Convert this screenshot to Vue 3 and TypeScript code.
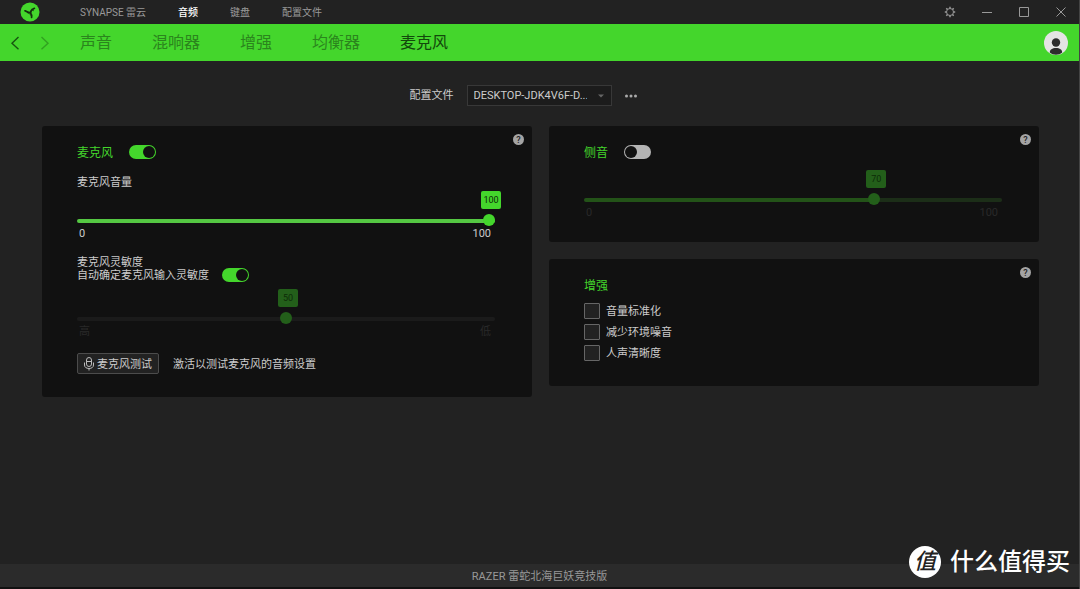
<script setup lang="ts">
import { computed, ref } from 'vue'

const menu = ['SYNAPSE 雷云', '音频', '键盘', '配置文件']
const activeMenu = ref('音频')
const tabs = ['声音', '混响器', '增强', '均衡器', '麦克风']
const activeTab = ref('麦克风')

const profile = ref('DESKTOP-JDK4V6F-D...')

const micOn = ref(true)
const micVolume = ref(100)
const autoSensitivity = ref(true)
const sensitivity = ref(50)
const sidetoneOn = ref(false)
const sidetone = ref(70)

const enhancements = ref([
  { id: 'normalize', label: '音量标准化', checked: false },
  { id: 'noise', label: '减少环境噪音', checked: false },
  { id: 'clarity', label: '人声清晰度', checked: false },
])

const micStyle = computed(() => ({ '--ratio': micVolume.value / 100 }))
const sensitivityStyle = computed(() => ({ '--ratio': sensitivity.value / 100 }))
const sidetoneStyle = computed(() => ({ '--ratio': sidetone.value / 100 }))
</script>

<template>
  <div class="app">
    <header class="titlebar">
      <svg class="logo" viewBox="0 0 20 20" aria-hidden="true">
        <circle cx="10" cy="10" r="9.5" fill="#44d62c" />
        <g fill="none" stroke="#14300f" stroke-linecap="round">
          <path d="M10.400 10.800C8.800 10.700 7.200 10.200 5 8.800" stroke-width="1.700" />
          <path d="M10.400 10.800C10.600 8.800 11.800 7.400 14.400 6.300" stroke-width="1.700" />
          <path d="M10.400 10.800C11.600 12.200 11.900 13.600 11.600 15.400" stroke-width="1.700" />
          <path d="M11.800 7.500 13.400 8.600M6.800 9.600 8.200 11.400M11.600 13.600 10 12.600" stroke-width="1" />
        </g>
      </svg>
      <nav class="menu">
        <a
          v-for="item in menu"
          :key="item"
          href="#"
          :class="{ active: item === activeMenu }"
          @click.prevent="activeMenu = item"
        >{{ item }}</a>
      </nav>
      <div class="window-controls">
        <button type="button" aria-label="设置">
          <svg viewBox="0 0 12 12">
            <circle cx="6" cy="6" r="3.5" />
            <path d="M6 .8v1.6M6 9.6v1.6M.8 6h1.6M9.6 6h1.6M2.3 2.3l1.2 1.2M8.5 8.5l1.2 1.2M9.7 2.3 8.5 3.5M3.5 8.5 2.3 9.7" stroke-width="1.5" />
          </svg>
        </button>
        <button type="button" aria-label="最小化">
          <svg viewBox="0 0 12 12"><path d="M1 6.5h10" /></svg>
        </button>
        <button type="button" aria-label="最大化">
          <svg viewBox="0 0 12 12"><path d="M1.5 1.5h9v9h-9z" /></svg>
        </button>
        <button type="button" aria-label="关闭">
          <svg viewBox="0 0 12 12"><path d="M1.5 1.5l9 9M10.5 1.5l-9 9" /></svg>
        </button>
      </div>
    </header>

    <div class="navbar">
      <div class="history">
        <button type="button" aria-label="后退">
          <svg viewBox="0 0 10 14"><path d="M8.500 1 2 7.200l6.500 6" /></svg>
        </button>
        <button type="button" class="faded" aria-label="前进">
          <svg viewBox="0 0 10 14"><path d="M1.500 1 8 7.200l-6.500 6" /></svg>
        </button>
      </div>
      <nav class="tabs">
        <a
          v-for="tab in tabs"
          :key="tab"
          href="#"
          :class="{ active: tab === activeTab }"
          @click.prevent="activeTab = tab"
        >{{ tab }}</a>
      </nav>
      <button type="button" class="avatar" aria-label="账户">
        <svg viewBox="0 0 24 24">
          <circle cx="12" cy="12" r="12" fill="#e4e4e4" />
          <circle cx="12" cy="11.500" r="4.200" fill="#2c2c2c" />
          <path d="M5.800 21.500c0-3 2.400-4.500 6.200-4.500s6.200 1.500 6.200 4.500c-1.800 1.500-3.900 2.200-6.200 2.200s-4.400-.7-6.200-2.200z" fill="#2c2c2c" />
        </svg>
      </button>
    </div>

    <main>
      <div class="profile">
        <label for="profile">配置文件</label>
        <div class="select">
          <select id="profile" v-model="profile">
            <option>DESKTOP-JDK4V6F-D...</option>
          </select>
          <svg viewBox="0 0 6 4" aria-hidden="true"><path d="M0 .5h6L3 3.500z" fill="#666" /></svg>
        </div>
        <button type="button" class="more" aria-label="更多">
          <svg viewBox="0 0 14 4">
            <circle cx="2.500" cy="2" r="1.500" /><circle cx="7" cy="2" r="1.500" /><circle cx="11.500" cy="2" r="1.500" />
          </svg>
        </button>
      </div>

      <div class="panels">
        <section class="panel mic">
          <button type="button" class="help" aria-label="帮助">?</button>
          <div class="heading">
            <h2 id="mic-title">麦克风</h2>
            <input v-model="micOn" type="checkbox" class="switch" aria-labelledby="mic-title" />
          </div>
          <label class="caption" for="mic-volume">麦克风音量</label>
          <div class="slider" :class="{ disabled: !micOn }" :style="micStyle">
            <output for="mic-volume">{{ micVolume }}</output>
            <input id="mic-volume" v-model.number="micVolume" type="range" min="0" max="100" :disabled="!micOn" />
            <div class="scale"><span>0</span><span>100</span></div>
          </div>

          <div class="sensitivity">
            <div class="lines">
              <label for="sensitivity">麦克风灵敏度</label>
              <label for="auto-sensitivity">自动确定麦克风输入灵敏度</label>
            </div>
            <input id="auto-sensitivity" v-model="autoSensitivity" type="checkbox" class="switch" />
          </div>
          <div class="slider plain" :class="{ disabled: autoSensitivity }" :style="sensitivityStyle">
            <output for="sensitivity">{{ sensitivity }}</output>
            <input id="sensitivity" v-model.number="sensitivity" type="range" min="0" max="100" :disabled="autoSensitivity" />
            <div class="scale"><span>高</span><span>低</span></div>
          </div>

          <div class="test">
            <button type="button" class="test-button">
              <svg viewBox="0 0 10 14" aria-hidden="true">
                <rect x="2.500" y=".5" width="5" height="9" rx="2.500" />
                <path d="M2.500 4.500h5M.5 5.500v2.500c0 2.200 1.800 3.500 4.500 3.500s4.500-1.300 4.500-3.500V5.500M5 11.500v2" />
              </svg>
              <span class="text">麦克风测试</span>
            </button>
            <span class="text">激活以测试麦克风的音频设置</span>
          </div>
        </section>

        <div class="column">
          <section class="panel sidetone">
            <button type="button" class="help" aria-label="帮助">?</button>
            <div class="heading">
              <h2 id="sidetone-title">侧音</h2>
              <input v-model="sidetoneOn" type="checkbox" class="switch" aria-labelledby="sidetone-title" />
            </div>
            <div class="slider" :class="{ disabled: !sidetoneOn }" :style="sidetoneStyle">
              <output for="sidetone">{{ sidetone }}</output>
              <input id="sidetone" v-model.number="sidetone" type="range" min="0" max="100" :disabled="!sidetoneOn" aria-labelledby="sidetone-title" />
              <div class="scale"><span>0</span><span>100</span></div>
            </div>
          </section>

          <section class="panel enhance">
            <button type="button" class="help" aria-label="帮助">?</button>
            <div class="heading"><h2>增强</h2></div>
            <ul>
              <li v-for="item in enhancements" :key="item.id">
                <input :id="item.id" v-model="item.checked" type="checkbox" class="box" />
                <label class="text" :for="item.id">{{ item.label }}</label>
              </li>
            </ul>
          </section>
        </div>
      </div>
    </main>

    <footer>RAZER 雷蛇北海巨妖竞技版</footer>

    <div class="watermark">
      <span class="badge">值</span>
      <span>什么值得买</span>
    </div>
  </div>
</template>

<style>
body {
  margin: 0;
  background: #222;
}
</style>

<style scoped>
.app {
  --green: #44d62c;
  position: relative;
  box-sizing: border-box;
  display: flex;
  flex-direction: column;
  min-height: 100vh;
  border-right: 1px solid #444;
  background: #222;
  color: #ccc;
  font: 11px/14px Roboto, "Noto Sans CJK SC", sans-serif;
}

button {
  padding: 0;
  border: 0;
  background: none;
  color: inherit;
  font: inherit;
  cursor: pointer;
}

a {
  color: inherit;
  text-decoration: none;
}

svg {
  display: block;
}

input {
  margin: 0;
}

.text {
  padding-top: 2px;
}

.titlebar {
  display: flex;
  align-items: center;
  height: 24px;
  padding: 0 12px 0 20px;
}

.logo {
  width: 20px;
  height: 20px;
}

.menu {
  display: flex;
  gap: 32px;
  margin-left: 40px;
  padding-top: 2px;
  color: #999;
  font-size: 10px;
}

.menu .active {
  color: #fff;
  font-weight: 500;
}

.window-controls {
  display: flex;
  gap: 25px;
  margin-left: auto;
}

.window-controls svg {
  width: 12px;
  height: 12px;
  fill: none;
  stroke: #999;
}

.navbar {
  display: flex;
  align-items: center;
  height: 37px;
  padding: 0 11px 0 10px;
  background: var(--green);
  color: #2b851d;
}

.history {
  display: flex;
  gap: 20px;
}

.history svg {
  width: 10px;
  height: 14px;
  fill: none;
  stroke: #175510;
  stroke-width: 1.4;
}

.history .faded {
  opacity: 0.4;
}

.tabs {
  display: flex;
  gap: 40px;
  margin-left: 30px;
  font-size: 16px;
  line-height: 24px;
}

.tabs .active {
  color: #12480b;
}

.avatar {
  width: 24px;
  height: 24px;
  margin-left: auto;
}

main {
  flex: 1;
  padding: 24px 40px 24px 42px;
}

.profile {
  display: flex;
  align-items: center;
  justify-content: center;
  margin-bottom: 20px;
  padding-right: 34px;
}

.select {
  display: flex;
  align-items: center;
  margin-left: 13px;
}

.select select {
  box-sizing: border-box;
  width: 145px;
  height: 21px;
  padding: 0 24px 0 6px;
  border: 1px solid #383838;
  border-radius: 0;
  appearance: none;
  background: #1c1c1c;
  color: #ccc;
  font: inherit;
}

.select svg {
  width: 6px;
  height: 4px;
  margin-left: -14px;
  margin-right: 8px;
  pointer-events: none;
}

.more {
  margin-left: 12px;
}

.more svg {
  width: 14px;
  height: 4px;
  fill: #aaa;
}

.panels {
  display: grid;
  grid-template-columns: 1fr 1fr;
  align-items: start;
  gap: 17px;
}

.column {
  display: grid;
  gap: 17px;
}

.panel {
  position: relative;
  padding: 18px 37px 23px 35px;
  border-radius: 3px;
  background: #111;
}

.help {
  position: absolute;
  top: 8px;
  right: 8px;
  width: 11px;
  height: 11px;
  border-radius: 50%;
  background: #a4a4a4;
  color: #222;
  font-size: 9px;
  font-weight: 500;
  line-height: 12px;
  text-align: center;
}

.heading {
  display: flex;
  align-items: center;
  gap: 16px;
}

h2 {
  margin: 0;
  padding-top: 2px;
  color: var(--green);
  font-size: 12px;
  font-weight: 400;
  line-height: 14px;
}

.switch {
  display: block;
  box-sizing: border-box;
  width: 27px;
  height: 14px;
  padding: 1px;
  border-radius: 7px;
  appearance: none;
  background: #b4b4b4;
  cursor: pointer;
}

.switch::before {
  content: "";
  display: block;
  width: 12px;
  height: 12px;
  border-radius: 50%;
  background: #111;
}

.switch:checked {
  background: var(--green);
}

.switch:checked::before {
  margin-left: auto;
}

.caption {
  display: block;
  margin-top: 16px;
}

.slider {
  --fill: #55c843;
  --rail: #2a2a2a;
  --thumb: #44d62c;
  position: relative;
  margin-top: 1px;
  padding-top: 24px;
}

.slider.disabled {
  --fill: #235318;
  --rail: #1c2e18;
  --thumb: #235f1a;
}

.slider.plain {
  --fill: #1b1b1b;
  --rail: #1b1b1b;
}

.slider output {
  position: absolute;
  top: 0;
  left: calc(8px + (100% - 12px) * var(--ratio));
  width: 20px;
  border-radius: 2px;
  transform: translateX(-50%);
  background: var(--thumb);
  color: #0d2c08;
  font-size: 9px;
  line-height: 18px;
  text-align: center;
}

.slider input {
  display: block;
  width: 100%;
  height: 12px;
  appearance: none;
  background: none;
}

.slider input::-webkit-slider-runnable-track {
  height: 4px;
  border-radius: 2px;
  background: linear-gradient(
    to right,
    var(--fill) calc(100% * var(--ratio)),
    var(--rail) calc(100% * var(--ratio))
  );
}

.slider input::-webkit-slider-thumb {
  width: 12px;
  height: 12px;
  margin-top: -5px;
  border-radius: 50%;
  appearance: none;
  background: var(--thumb);
}

.scale {
  display: flex;
  justify-content: space-between;
  padding: 1px 4px 0 2px;
  line-height: 12px;
}

.disabled .scale {
  color: #292929;
}

.sensitivity {
  display: flex;
  align-items: flex-end;
  gap: 13px;
  margin-top: 16px;
}

.lines label {
  display: block;
  line-height: 13px;
}

.sensitivity + .slider {
  margin-top: 7px;
}

.test {
  display: flex;
  align-items: center;
  gap: 14px;
  margin-top: 15px;
}

.test-button {
  display: flex;
  align-items: center;
  gap: 3px;
  box-sizing: border-box;
  height: 21px;
  padding: 0 6px;
  border: 1px solid #4c4c4c;
  border-radius: 2px;
  background: #222;
}

.test-button svg {
  width: 10px;
  height: 14px;
  fill: none;
  stroke: #bbb;
}

.sidetone .slider {
  margin-top: 10px;
}

ul {
  margin: 7px 0 0;
  padding: 0;
  list-style: none;
}

li {
  display: flex;
  align-items: center;
  gap: 6px;
  height: 21px;
}

.box {
  box-sizing: border-box;
  width: 16px;
  height: 16px;
  border: 1px solid #666;
  border-radius: 1px;
  appearance: none;
  background: #222;
}

.box:checked {
  background: var(--green);
}

footer {
  padding-top: 2px;
  border-bottom: 2px solid #111;
  background: #2b2b2b;
  color: #999;
  line-height: 21px;
  text-align: center;
}

.watermark {
  position: absolute;
  right: 9px;
  bottom: 11px;
  display: flex;
  align-items: center;
  gap: 9px;
  color: #fff;
  font-size: 24px;
  font-weight: 500;
  line-height: 32px;
}

.badge {
  width: 32px;
  height: 32px;
  border-radius: 50%;
  background: #fff;
  color: #222;
  font-size: 22px;
  font-style: italic;
  text-align: center;
}
</style>
